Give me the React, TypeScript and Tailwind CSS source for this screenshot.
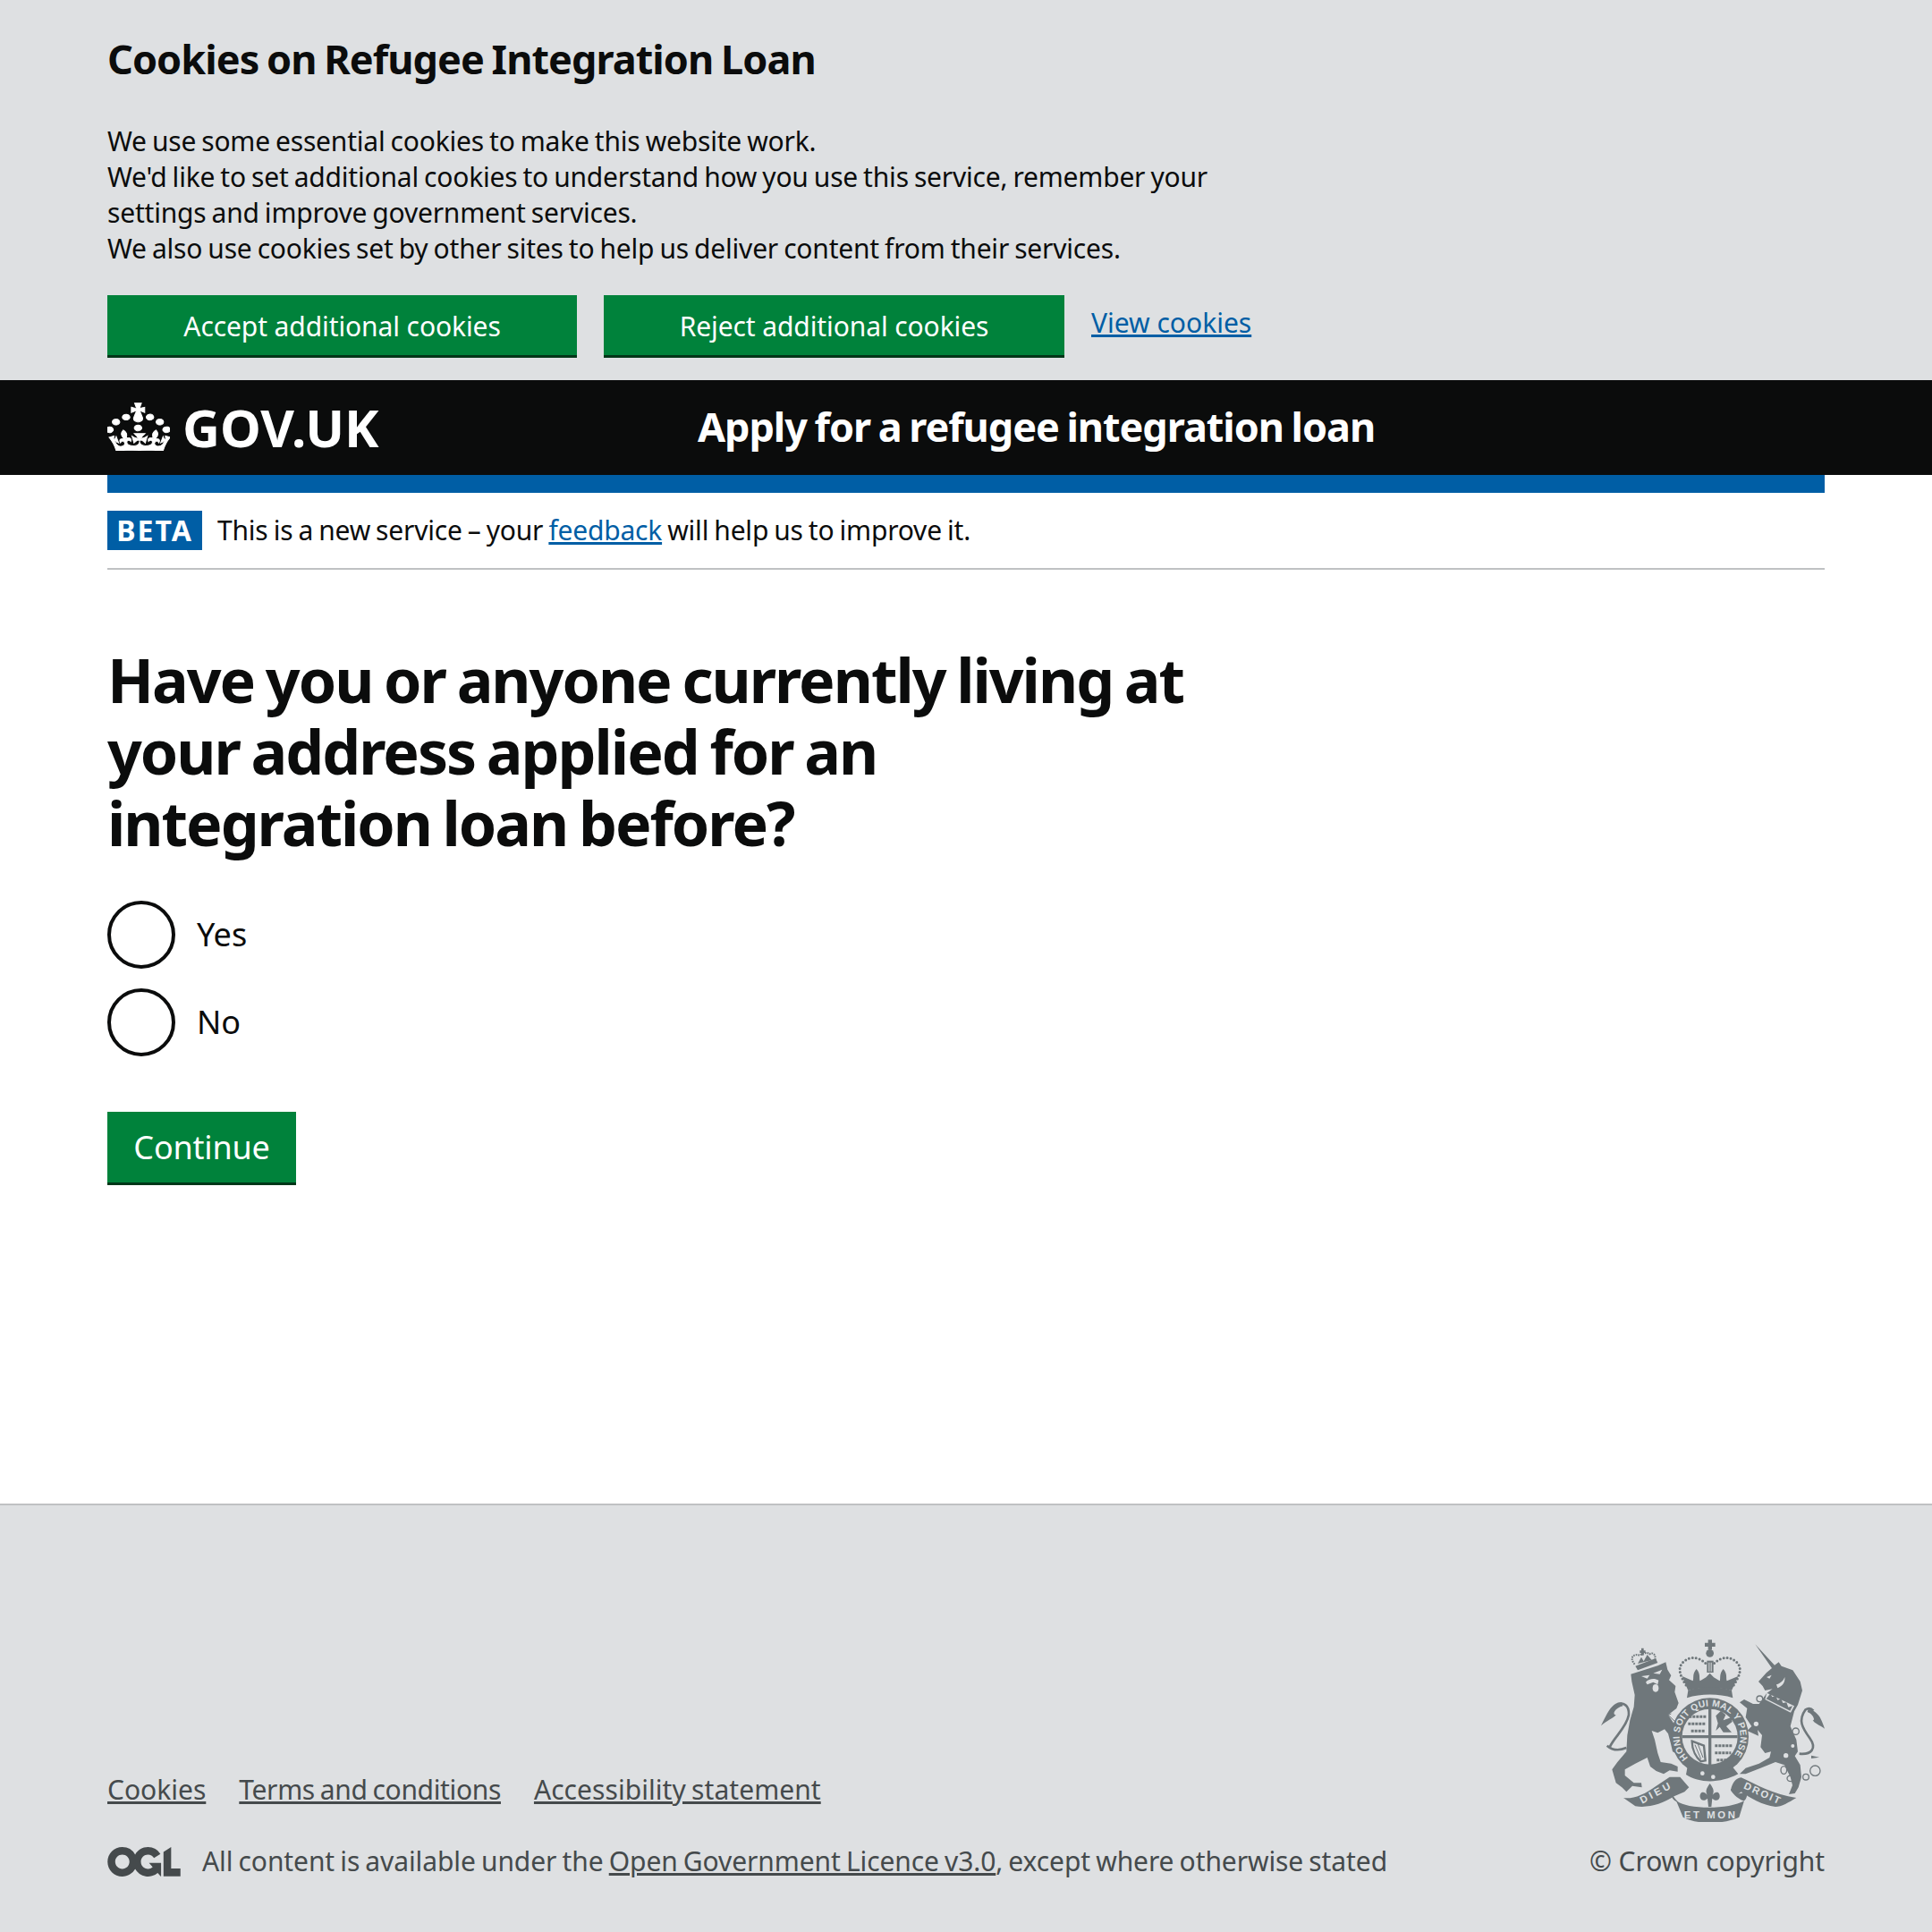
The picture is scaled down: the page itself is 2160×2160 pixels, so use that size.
const font = "[font-family:'Noto_Sans',sans-serif]";
const bodyText = "text-[30px] leading-[40px] tracking-[-0.2px] [word-spacing:-1.5px]";

const CrownLogo = () => (
  <svg viewBox="0.8 -0.4 31 30" className="w-[70px] h-[54px] -mt-[2px] fill-white stroke-white [stroke-width:0.45]" preserveAspectRatio="none">
    <path d="M22.6 10.4c-1 .4-2-.1-2.4-1-.4-.9.1-2 1-2.4.9-.4 2-.1 2.4 1s-.1 2-1 2.4m-5.9 6.7c-.9.4-2 0-2.4-1-.4-.9.1-2 1-2.4.9-.4 2-.1 2.4 1 .4.9-.1 2-1 2.4m10.8-3.7c-1 .4-2 0-2.4-1-.4-.9 0-2 1-2.4s2 0 2.4 1c.3 1-.1 2-1 2.4m3.3 4.8c-1 .4-2-.1-2.4-1-.4-.9.1-2 1-2.4.9-.4 2-.1 2.4 1 .4.9-.1 2-1 2.4M17 4.7l2.3 1.2V2.5l-2.3.7-.2-.2.9-3h-3.4l.9 3-.2.2c-.1.1-2.3-.7-2.3-.7v3.4L15 4.7c.1.1.1.2.2.2l-1.3 4c-.1.2-.1.4-.1.6 0 1.1.8 2 1.9 2.2h.7c1-.2 1.9-1.1 1.9-2.2 0-.2 0-.4-.1-.6l-1.3-4c-.1-.1 0-.2.1-.2m-7.6 5.7c.9.4 2-.1 2.4-1 .4-.9-.1-2-1-2.4-.9-.4-2 .1-2.4 1s0 2 1 2.4m-5 3c.9.4 2-.1 2.4-1 .4-.9-.1-2-1-2.4-.9-.4-2 .1-2.4 1-.3 1 .1 2 1 2.4m-3.2 4.8c.9.4 2 0 2.4-1 .4-.9-.1-2-1-2.4-.9-.4-2 0-2.4 1s.1 2 1 2.4m14.8 11c4.4 0 8.6.3 12.3.8 1.1-4.5 2.4-7 3.7-8.8l-2.5-.9c.2 1.3.3 1.9 0 2.7-.4-.4-.8-1.1-1.1-2.3l-1.2 4c.7-.5 1.3-.8 2-.9-1.1 2.5-2.6 3.1-3.5 3-1.1-.2-1.7-1.2-1.5-2.1.3-1.2 1.5-1.5 2.1-.1 1.1-2.3-.8-3-2-2.3 1.9-1.9 2.1-3.5.6-5.6-2.1 1.6-2.1 3.2-1.2 5.5-1.2-1.4-3.2-.6-2.5 1.6.9-1.4 2.1-.5 1.9.8-.2 1.1-1.7 2.1-3.5 1.9-2.7-.2-2.9-2.1-2.9-3.6.7-.1 1.9.5 2.9 1.9l1-4.3c-1.1 1.1-2.1 1.4-3.2 1.4.4-1.2 2.1-3 2.1-3h-5.4s1.7 1.9 2.1 3c-1.1 0-2.1-.2-3.2-1.4l1 4.3c1-1.4 2.2-2 2.9-1.9-.1 1.5-.2 3.4-2.9 3.6-1.9.2-3.4-.8-3.5-1.9-.2-1.3 1-2.2 1.9-.8.7-2.3-1.2-3-2.5-1.6.9-2.2.9-3.9-1.2-5.5-1.5 2-1.3 3.7.6 5.6-1.2-.7-3.1 0-2 2.3.6-1.4 1.8-1.1 2.1.1.2.9-.3 1.9-1.5 2.1-.9.2-2.4-.5-3.5-3 .6 0 1.2.3 2 .9l-1.2-4c-.3 1.1-.7 1.9-1.1 2.3-.3-.8-.2-1.4 0-2.7l-2.5.9c1.3 1.9 2.7 4.3 3.7 8.8 3.7-.5 7.9-.8 12.3-.8" />
  </svg>
);

const OglLogo = () => (
  <svg viewBox="0 0 483.2 195.7" className="w-[82px] h-[33px] fill-[#454a4c] shrink-0">
    <path d="M421.5 142.8V.1l-50.7 32.3v161.1h112.4v-50.7zm-122.3-9.6A47.12 47.12 0 0 1 221 97.8c0-26 21.1-47.1 47.1-47.1 16.7 0 31.4 8.7 39.7 21.8l42.7-27.2A97.63 97.63 0 0 0 268.1 0c-36.5 0-68.3 20.1-85.1 49.7A98 98 0 0 0 97.8 0C43.9 0 0 43.9 0 97.8s43.9 97.8 97.8 97.8c36.5 0 68.3-20.1 85.1-49.7a97.76 97.76 0 0 0 149.6 25.4l19.4 22.2h3v-87.8h-80l24.3 27.5zM97.8 145c-26 0-47.1-21.1-47.1-47.1s21.1-47.1 47.1-47.1 47.2 21 47.2 47S123.8 145 97.8 145" />
  </svg>
);

const ink = "#6f777b";
const paper = "#dee0e2";

// royal arms, traced by hand from the crest
const RoyalArms = () => (
  <svg viewBox="60 70 750 610" className="w-[250px] h-[204px] fill-[#6f777b] stroke-none">
    {/* lion */}
    <g transform="translate(45 60)">
      <path d="M115 125 L205 97 L232 85 L238 110 L250 130 L243 145 L265 165 L262 185 L275 222 L268 240 L240 262 L262 295 L270 330 L285 365 L275 395 L255 385 L248 355 L240 325 L228 310 L205 322 L185 315 L195 345 L205 390 L215 420 L250 425 L272 435 L272 452 L245 448 L225 460 L200 450 L180 435 L170 405 L130 425 L95 445 L95 465 L125 490 L150 490 L152 505 L120 500 L100 520 L85 505 L65 490 L52 445 L70 420 L100 385 L103 330 L112 280 L125 235 L128 195 L118 150 Z" />
      <path d="M100 372 C70 385 50 378 35 365 M45 368 C60 335 100 305 108 262 C110 228 90 220 70 226" fill="none" stroke={ink} strokeWidth="8" />
      <path d="M85 220 C50 218 35 260 15 298 C35 280 55 275 65 262 C50 262 62 238 88 232 Z" />
      <path d="M150 132 L178 128 L170 140 Z M190 122 L220 110 L212 125 Z M165 152 C175 140 195 138 208 146 L205 160 L190 152 L170 160 Z" fill={paper} />
      <ellipse cx="198" cy="172" rx="10" ry="13" fill={paper} />
      {/* lion's crown */}
      <path d="M130 98 L198 72 L205 87 L138 112 Z" />
      <path d="M128 92 C108 70 125 55 145 62 C155 55 170 50 178 58 C195 48 200 70 195 82" fill="none" stroke={ink} strokeWidth="6" strokeDasharray="5 3" />
      <path d="M145 46 H150 V38 H158 V46 H164 V54 H158 V62 H150 V54 H145 Z M138 90 L150 68 L158 82 L170 60 L185 78 Z" />
      <path d="M250 258 L240 262 L295 315" fill="none" stroke={ink} strokeWidth="3" />
    </g>

    {/* unicorn */}
    <g transform="translate(420 60)">
      <path d="M157 25 L222 95 L236 85 L245 98 L283 112 L308 150 L315 180 L300 228 L288 250 L275 300 L295 345 L300 385 L290 400 L308 430 L312 470 L302 505 L290 525 L270 528 L282 498 L275 470 L255 430 L225 420 L175 440 L125 460 L105 460 L125 440 L170 425 L205 405 L210 385 L190 390 L175 370 L180 330 L165 312 L168 332 L130 315 L145 300 L125 270 L130 240 L105 220 L120 210 L150 225 L170 225 L195 190 L215 175 L190 180 L182 165 L168 150 L195 120 L213 105 Z" />
      <path d="M305 392 C345 396 365 375 340 340 C315 305 300 280 325 245 C335 238 345 240 352 248" fill="none" stroke={ink} strokeWidth="8" />
      <path d="M345 398 L372 404 L345 408 Z M335 242 C370 248 380 280 390 308 C375 295 360 295 350 280 C360 280 350 258 332 252 Z" />
      <path d="M196 188 L288 232 L276 254 L190 210 Z" fill={paper} />
      <path d="M200 200 L208 190 L214 202 L226 198 L232 212 L244 208 L250 222 L262 220 L268 236 L282 232 L274 248 L194 208 Z" />
      <path d="M228 160 C245 155 252 145 256 135 C258 150 250 165 232 172 Z M195 135 L212 128 L205 140 Z" fill={paper} />
      <circle cx="260" cy="398" r="8" fill={paper} />
      <circle cx="283" cy="366" r="6" fill={paper} />
      <g fill={paper} stroke={ink} strokeWidth="4">
        <circle cx="172" cy="208" r="10" />
        <circle cx="160" cy="292" r="10" />
        <circle cx="293" cy="317" r="11" />
      </g>
      <g fill="none" stroke={ink} strokeWidth="4">
        <ellipse cx="253" cy="447" rx="10" ry="13" />
        <ellipse cx="276" cy="475" rx="12" ry="10" />
        <circle cx="327" cy="470" r="10" />
        <circle cx="358" cy="449" r="17" />
      </g>
    </g>

    {/* crown */}
    <path d="M419 70 H432 V80 H443 V93 H432 V103 H419 V93 H408 V80 H419 Z" />
    <circle cx="425" cy="115" r="13" />
    <path d="M345 222 C325 190 315 165 335 145 C355 125 385 125 412 150 M505 222 C525 190 535 165 515 145 C495 125 465 125 438 150" fill="none" stroke={ink} strokeWidth="9" strokeDasharray="0 12" strokeLinecap="round" />
    <path d="M415 140 H437 V180 H415 Z" />
    <path d="M421 146 H424 V176 H421 Z M428 146 H431 V176 H428 Z" fill={paper} />
    <path d="M380 168 C395 185 388 200 392 208 L412 196 L425 182 L438 196 L458 208 C462 200 455 185 470 168 C485 185 478 198 482 208 L520 192 L498 240 C455 228 395 228 352 240 L332 192 L368 208 C372 198 365 185 380 168 Z" />
    <path d="M352 240 C395 225 455 225 498 240 L502 265 C455 250 395 250 348 265 Z" />

    {/* garter and shield */}
    <circle cx="425" cy="395" r="130" />
    <circle cx="425" cy="395" r="93" fill={paper} />
    <path id="garter" d="M352 466 A102 102 0 1 1 498 466" fill="none" />
    <text fontFamily="'Liberation Sans', sans-serif" fontSize="31" fontWeight="700" fill={paper} letterSpacing="1">
      <textPath href="#garter">HONI SOIT QUI MAL Y PENSE</textPath>
    </text>
    <path d="M420 300 H430 V490 H420 Z M332 390 H518 V400 H332 Z" />
    {/* quarters */}
    <g fill="none" stroke={ink} strokeWidth="9" strokeDasharray="9 3">
      <path d="M355 328 H412 M352 352 H412 M362 376 H408" />
      <path d="M442 425 H500 M442 449 H496 M448 473 H485" />
    </g>
    <path d="M445 325 L462 308 L478 322 L470 340 L497 330 L500 345 L480 360 L498 380 L470 380 L458 362 L445 375 L452 350 Z" />
    <path d="M365 410 L405 425 L410 475 L395 478 C380 465 365 440 365 410 Z" fill="none" stroke={ink} strokeWidth="7" />
    <path d="M375 422 L395 470 M385 420 L402 465" fill="none" stroke={ink} strokeWidth="3" />
    {/* buckle */}
    <path d="M350 495 C390 518 460 518 500 495 L520 520 C460 552 390 552 345 522 Z" />
    <circle cx="400" cy="518" r="7" fill={paper} />
    <circle cx="436" cy="530" r="7" fill={paper} />

    {/* fleur de lis */}
    <path d="M425 552 C412 570 410 578 416 590 C405 575 390 580 392 598 C395 612 410 610 417 602 L420 630 H430 L433 602 C440 610 455 612 458 598 C460 580 445 575 434 590 C440 578 438 570 425 552 Z" />

    {/* motto */}
    <path d="M135 600 C165 605 205 590 245 560 L290 530 L325 530 L355 565 L340 580 L305 595 C265 620 220 635 175 628 Z" />
    <path d="M300 590 C305 600 325 625 345 630 L312 612 C300 605 295 595 298 590 Z" />
    <path d="M312 610 C350 640 490 640 540 610 L523 665 C470 690 380 690 335 665 Z" />
    <path d="M495 570 C500 590 530 610 540 610 C550 600 552 590 545 575 C530 590 510 590 505 570 Z" />
    <path d="M495 575 C500 550 510 535 530 532 C580 555 640 590 715 600 C690 615 665 630 645 630 C600 625 560 600 530 580 C520 590 505 590 495 575 Z" />
    <g fontFamily="'Liberation Sans', sans-serif" fontSize="34" fontWeight="700" fill={paper}>
      <text transform="translate(198 620) rotate(-28)" textLength="110">DIEU</text>
      <text x="338" y="669" textLength="172">ET MON</text>
      <text transform="translate(536 568) rotate(24)" textLength="130">DROIT</text>
    </g>
  </svg>
);

const GreenButton = ({ children, className }: { children: React.ReactNode; className: string }) => (
  <button className={"bg-[#00823b] text-white border-b-[3px] border-[#003618] text-center " + className}>
    {children}
  </button>
);

const Radio = ({ label }: { label: string }) => (
  <label className="flex items-center">
    <span className="w-[76px] h-[76px] rounded-full border-[4px] border-[#0b0c0c] shrink-0" />
    <span className="ml-[24px] text-[36px] leading-[48px]">{label}</span>
  </label>
);

export default function App() {
  return (
    <div className={"min-h-[2160px] flex flex-col bg-white text-[#0b0c0c] " + font}>
      <div className="bg-[#dee0e2] h-[425px] px-[120px] pt-[36px]">
        <h2 className="text-[45px] leading-[60px] font-bold tracking-[-0.95px] [word-spacing:-2px]">Cookies on Refugee Integration Loan</h2>
        <div className={"mt-[42px] w-[1280px] " + bodyText}>
          <p>We use some essential cookies to make this website work.</p>
          <p>We'd like to set additional cookies to understand how you use this service, remember your settings and improve government services.</p>
          <p>We also use cookies set by other sites to help us deliver content from their services.</p>
        </div>
        <div className="flex items-start mt-[32px]">
          <GreenButton className="w-[525px] h-[70px] pt-[2px] text-[30px] tracking-[-0.1px]">Accept additional cookies</GreenButton>
          <GreenButton className="w-[515px] h-[70px] pt-[2px] text-[30px] tracking-[-0.1px] ml-[30px]">Reject additional cookies</GreenButton>
          <a className="ml-[30px] mt-[11px] text-[30px] leading-[40px] text-[#005ea5] underline">View cookies</a>
        </div>
      </div>

      <header className="bg-[#0b0c0c] h-[106px] px-[120px] flex items-center text-white">
        <div className="w-[660px] flex items-center">
          <CrownLogo />
          <span className="ml-[14px] text-[58px] font-bold leading-none">GOV.UK</span>
        </div>
        <span className="text-[45px] font-bold tracking-[-1.05px] [word-spacing:-2px] -mt-[2px]">Apply for a refugee integration loan</span>
      </header>

      <main className="flex-1 px-[120px]">
        <div className="h-[20px] bg-[#005ea5]" />
        <div className="flex items-center h-[86px] border-b-2 border-[#bfc1c3]">
          <strong className="bg-[#005ea5] text-white w-[106px] h-[44px] flex items-center justify-center text-[32px] font-bold tracking-[2px]">BETA</strong>
          <p className={"ml-[17px] " + bodyText}>
            This is a new service – your <a className="text-[#005ea5] underline">feedback</a> will help us to improve it.
          </p>
        </div>

        <h1 className="mt-[83px] w-[1215px] text-[68px] leading-[80px] font-bold tracking-[-2px] [word-spacing:-3px]">
          Have you or anyone currently living at your address applied for an integration loan before?
        </h1>
        <div className="mt-[47px] flex flex-col gap-[22px]">
          <Radio label="Yes" />
          <Radio label="No" />
        </div>
        <GreenButton className="mt-[62px] w-[211px] h-[82px] text-[36px] tracking-[-0.2px]">Continue</GreenButton>
      </main>

      <footer className="bg-[#dee0e2] border-t-2 border-[#bfc1c3] h-[479px] px-[120px] text-[#454a4c] flex items-end pb-[59px]">
        <div className="flex-1">
          <ul className="flex gap-[37px] text-[30px] leading-[40px] underline [word-spacing:-1.5px]">
            <li>Cookies</li>
            <li className="tracking-[-0.35px]">Terms and conditions</li>
            <li className="tracking-[0.05px]">Accessibility statement</li>
          </ul>
          <div className="flex items-center mt-[40px]">
            <OglLogo />
            <p className="ml-[24px] text-[30px] leading-[40px] tracking-[-0.1px] [word-spacing:-1.5px]">
              All content is available under the <a className="underline">Open Government Licence v3.0</a>, except where otherwise stated
            </p>
          </div>
        </div>
        <div className="flex flex-col items-end">
          <RoyalArms />
          <span className="mt-[24px] text-[30px] leading-[40px] tracking-[-0.1px]">© Crown copyright</span>
        </div>
      </footer>
    </div>
  );
}
